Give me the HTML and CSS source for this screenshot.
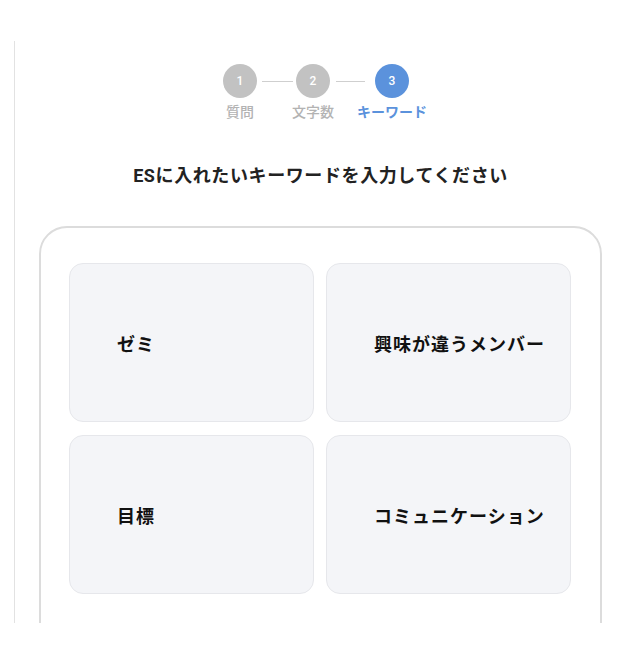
FILE: index.html
```html
<!DOCTYPE html>
<html lang="ja">
<head>
<meta charset="utf-8">
<title>キーワード</title>
<link rel="stylesheet" href="styles.css">
</head>
<body>
<div class="frame">
  <div class="stepper">
    <div class="step">
      <div class="circle">1</div>
      <div class="label">質問</div>
    </div>
    <div class="line line-a"></div>
    <div class="step">
      <div class="circle">2</div>
      <div class="label">文字数</div>
    </div>
    <div class="line line-b"></div>
    <div class="step active">
      <div class="circle">3</div>
      <div class="label">キーワード</div>
    </div>
  </div>
  <h1 class="title">ESに入れたいキーワードを入力してください</h1>
  <div class="card">
    <div class="grid">
      <div class="tile">ゼミ</div>
      <div class="tile">興味が違うメンバー</div>
      <div class="tile">目標</div>
      <div class="tile">コミュニケーション</div>
    </div>
  </div>
</div>
</body>
</html>
```
FILE: styles.css
```css
html, body {
  margin: 0;
  padding: 0;
  background: #ffffff;
}
body {
  font-family: Roboto, "Noto Sans CJK JP", sans-serif;
  color: #1a1a1a;
}
.frame {
  margin: 41px 0 0 14px;
  width: 612px;
  height: 582px;
  overflow: hidden;
  border-left: 1px solid #e2e2e2;
  box-sizing: border-box;
  padding-top: 23px;
}
.stepper {
  display: flex;
  justify-content: center;
  align-items: flex-start;
  padding-left: 9px;
}
.step {
  display: flex;
  flex-direction: column;
  align-items: center;
}
.circle {
  width: 34px;
  height: 34px;
  border-radius: 50%;
  background: #c2c2c2;
  color: #ffffff;
  font-size: 12px;
  font-weight: 500;
  display: flex;
  align-items: center;
  justify-content: center;
}
.label {
  margin-top: 6px;
  font-size: 14px;
  line-height: 16px;
  color: #b3b3b3;
  font-weight: 500;
  white-space: nowrap;
}
.step.active .circle {
  background: #5b92dc;
}
.step.active .label {
  color: #5b92dc;
  font-weight: 700;
}
.line {
  height: 1px;
  background: #cfcfcf;
  margin-top: 17px;
}
.line-a {
  width: 31px;
  margin-left: 5px;
  margin-right: -1px;
}
.line-b {
  width: 29px;
  margin-left: 2px;
  margin-right: -8px;
}
.title {
  margin: 43px 0 0 0;
  text-align: center;
  font-size: 18px;
  line-height: 26px;
  font-weight: 700;
  letter-spacing: 0.6px;
  color: #222222;
}
.card {
  margin: 37px 24px 0 24px;
  border: 2px solid #dcdcdc;
  border-radius: 28px;
  padding: 35px 29px 40px 28px;
  min-height: 500px;
}
.grid {
  display: grid;
  grid-template-columns: 1fr 1fr;
  column-gap: 12px;
  row-gap: 13px;
}
.tile {
  height: 159px;
  box-sizing: border-box;
  background: #f4f5f8;
  border: 1px solid #e6e7eb;
  border-radius: 14px;
  display: flex;
  align-items: center;
  padding-left: 47px;
  font-size: 18px;
  font-weight: 700;
  letter-spacing: 1px;
  color: #111111;
}
```
